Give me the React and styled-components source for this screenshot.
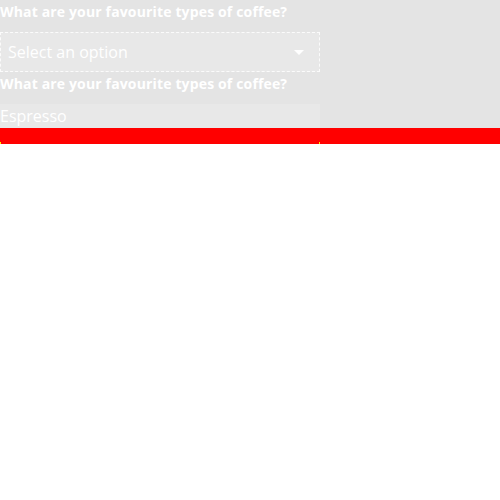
import styled, { createGlobalStyle } from "styled-components";

const Global = createGlobalStyle`
  html, body { margin: 0; padding: 0; background: #fff; }
  body { font-family: "Open Sans", "Liberation Sans", sans-serif; }
`;

const Page = styled.div`
  background: #e4e4e4;
  width: 500px;
`;

const Form = styled.div`
  width: 320px;
  display: flex;
  flex-direction: column;
`;

const Label = styled.label`
  display: block;
  color: #fff;
  font-size: 14px;
  font-weight: 700;
  letter-spacing: 0.15px;
  line-height: 24px;
  margin-bottom: ${(p) => p.gap || 0}px;
`;

const SelectBox = styled.div`
  box-sizing: border-box;
  height: 40px;
  border: 1px dashed rgba(255, 255, 255, 0.85);
  background: #e8e8e8;
  display: flex;
  align-items: center;
  justify-content: space-between;
  padding: 0 15px 0 7px;
  color: #fff;
  font-size: 16px;
`;

const Arrow = styled.span`
  width: 0;
  height: 0;
  border-left: 5px solid transparent;
  border-right: 5px solid transparent;
  border-top: 5px solid #fff;
`;

const Chip = styled.div`
  height: 24px;
  background: #e8e8e8;
  color: #fff;
  font-size: 16px;
  line-height: 24px;
`;

const Bar = styled.div`
  height: 16px;
  background: #ff0000;
  position: relative;
`;

const Dot = styled.span`
  position: absolute;
  bottom: 0;
  left: ${(p) => p.x}px;
  width: 1px;
  height: 2px;
  background: #ffee00;
`;

export default function App() {
  return (
    <>
      <Global />
      <Page>
        <Form>
          <Label gap={8}>What are your favourite types of coffee?</Label>
          <SelectBox>
            <span>Select an option</span>
            <Arrow />
          </SelectBox>
          <Label gap={8}>What are your favourite types of coffee?</Label>
          <Chip>Espresso</Chip>
        </Form>
        <Bar>
          <Dot x={0} />
          <Dot x={319} />
        </Bar>
      </Page>
    </>
  );
}
